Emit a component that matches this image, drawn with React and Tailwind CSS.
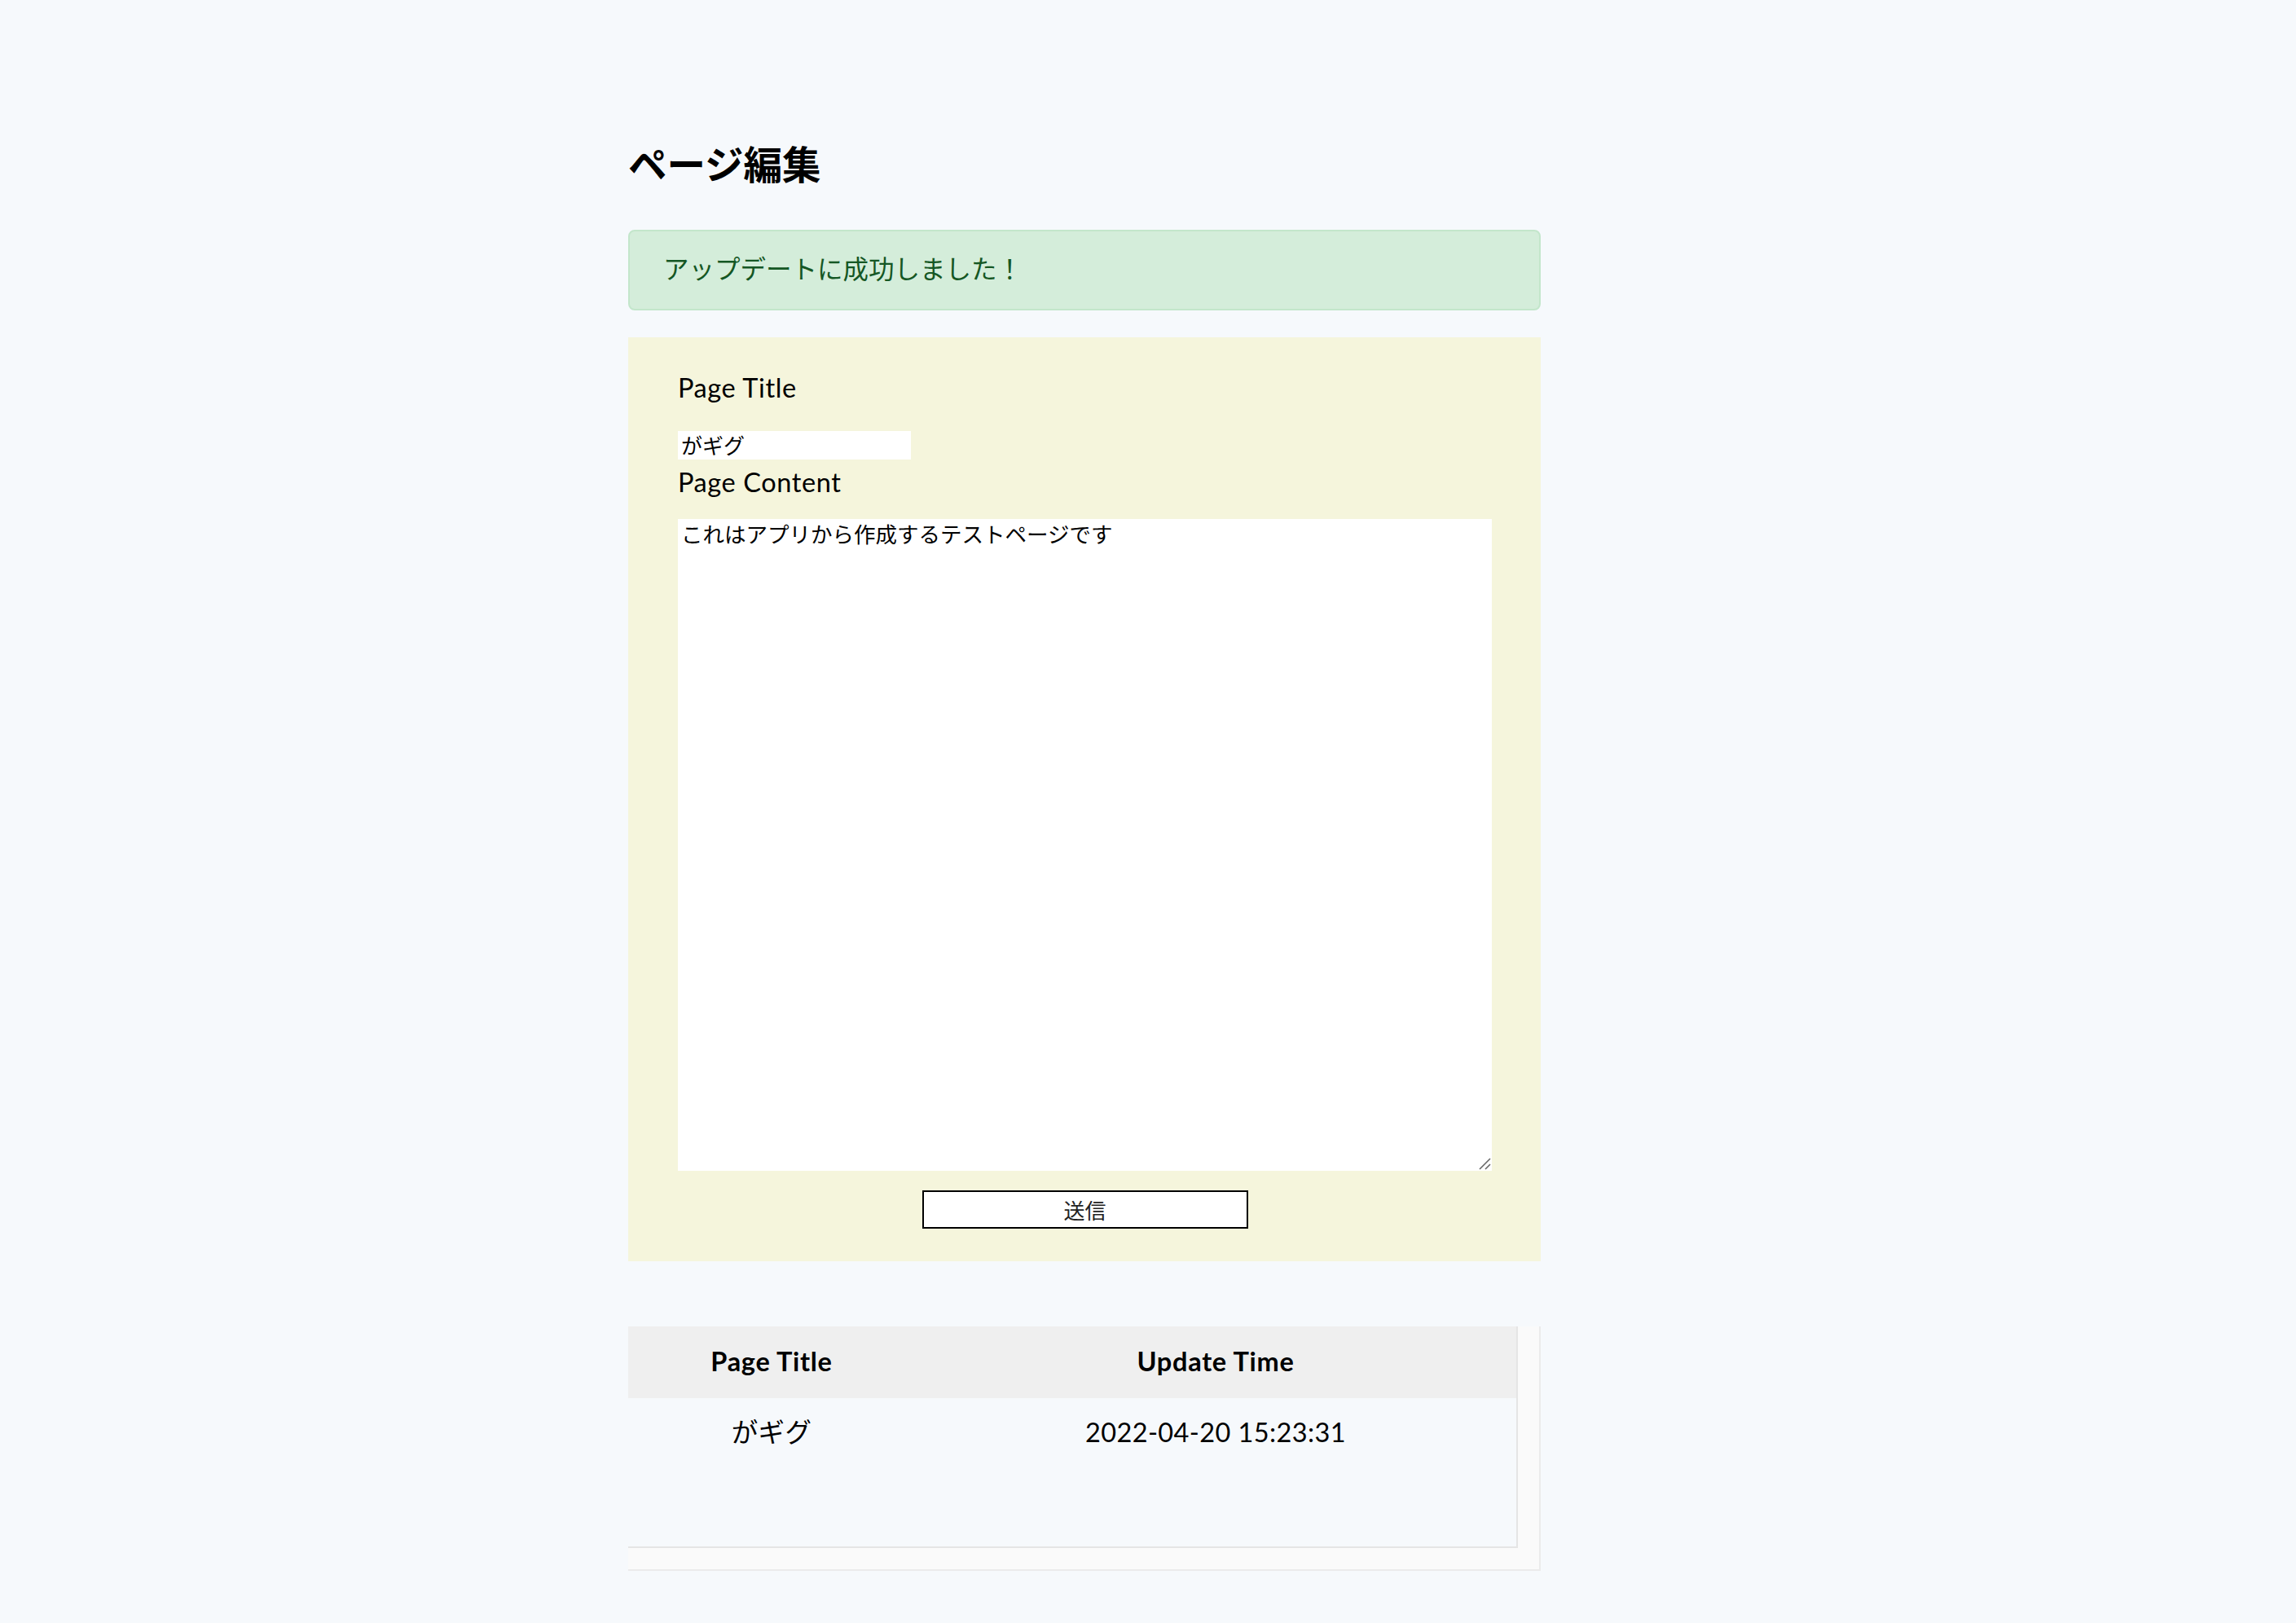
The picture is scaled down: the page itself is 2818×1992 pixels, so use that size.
import React, { useState } from 'react';

const App = () => {
  const [title, setTitle] = useState('がギグ');
  const [content, setContent] = useState('これはアプリから作成するテストページです');

  const pages = [{ title: 'がギグ', updated: '2022-04-20 15:23:31' }];

  return (
    <div className="min-h-screen bg-[#f6f9fc] text-black font-['Lato','Noto_Sans_CJK_JP',sans-serif]">
      <div className="ml-[771px] w-[1120px] pt-[176px] pb-[60px]">

        {/* Heading */}
        <h1 className="text-[47.5px] font-bold leading-none font-['Noto_Sans_CJK_JP',sans-serif]">ページ編集</h1>

        {/* Success alert */}
        <div className="mt-[58px] h-[99px] flex items-center pl-[41px] bg-[#d4edda] border-2 border-[#c3e6cb] rounded-[8px] text-[#155724] text-[31.5px]">
          アップデートに成功しました！
        </div>

        {/* Edit form */}
        <form
          className="mt-[33px] bg-[#f5f5dc] pt-[38px] pl-[61px] pr-[60px] pb-[40px]"
          onSubmit={e => e.preventDefault()}
        >
          <label className="block text-[32.5px] leading-[48px] tracking-[0.6px]">Page Title</label>
          <input
            value={title}
            onChange={e => setTitle(e.target.value)}
            className="mt-[29px] block w-[286px] h-[35px] bg-white px-[4px] pb-[2px] text-[26px] leading-[33px] outline-none font-['Noto_Sans_CJK_JP',sans-serif]"
          />
          <label className="block mt-[4px] text-[32.5px] leading-[48px] tracking-[0.6px]">Page Content</label>
          <div className="relative mt-[21px]">
            <textarea
              value={content}
              onChange={e => setContent(e.target.value)}
              className="block w-full h-[800px] bg-white px-[4px] py-0 text-[26.5px] leading-[1.35] resize-none outline-none font-['Noto_Sans_CJK_JP',sans-serif]"
            />
            <svg className="absolute right-[1px] bottom-[1px]" width="16" height="16" viewBox="0 0 16 16">
              <path d="M15 2 L2 15" stroke="#666" strokeWidth="1.6" />
              <path d="M15 9 L9 15" stroke="#666" strokeWidth="1.6" />
            </svg>
          </div>
          <div className="mt-[24px] flex justify-center">
            <button
              type="submit"
              className="w-[400px] h-[47px] bg-white border-2 border-black text-[26px] text-[#222] font-['Noto_Sans_CJK_JP',sans-serif]"
            >
              送信
            </button>
          </div>
        </form>

        {/* Pages table (scroll box) */}
        <div className="mt-[80px] w-[1120px] h-[300px] bg-[#fafafa] border-r-2 border-b-2 border-[#ebebeb]">
          <div className="w-[1092px] h-[272px] bg-[#f6f9fc] border-r-2 border-b-2 border-[#e5e5e5]">
            <div className="grid grid-cols-[352px_738px] h-[88px] bg-[#efefef] items-center text-[32.5px] font-bold tracking-[0.7px]">
              <div className="text-center">Page Title</div>
              <div className="text-center">Update Time</div>
            </div>
            {pages.map((p, i) => (
              <div key={i} className="grid grid-cols-[352px_738px] h-[86px] items-center text-[32.5px] tracking-[0.4px]">
                <div className="text-center">{p.title}</div>
                <div className="text-center">{p.updated}</div>
              </div>
            ))}
          </div>
        </div>

      </div>
    </div>
  );
};

export default App;
